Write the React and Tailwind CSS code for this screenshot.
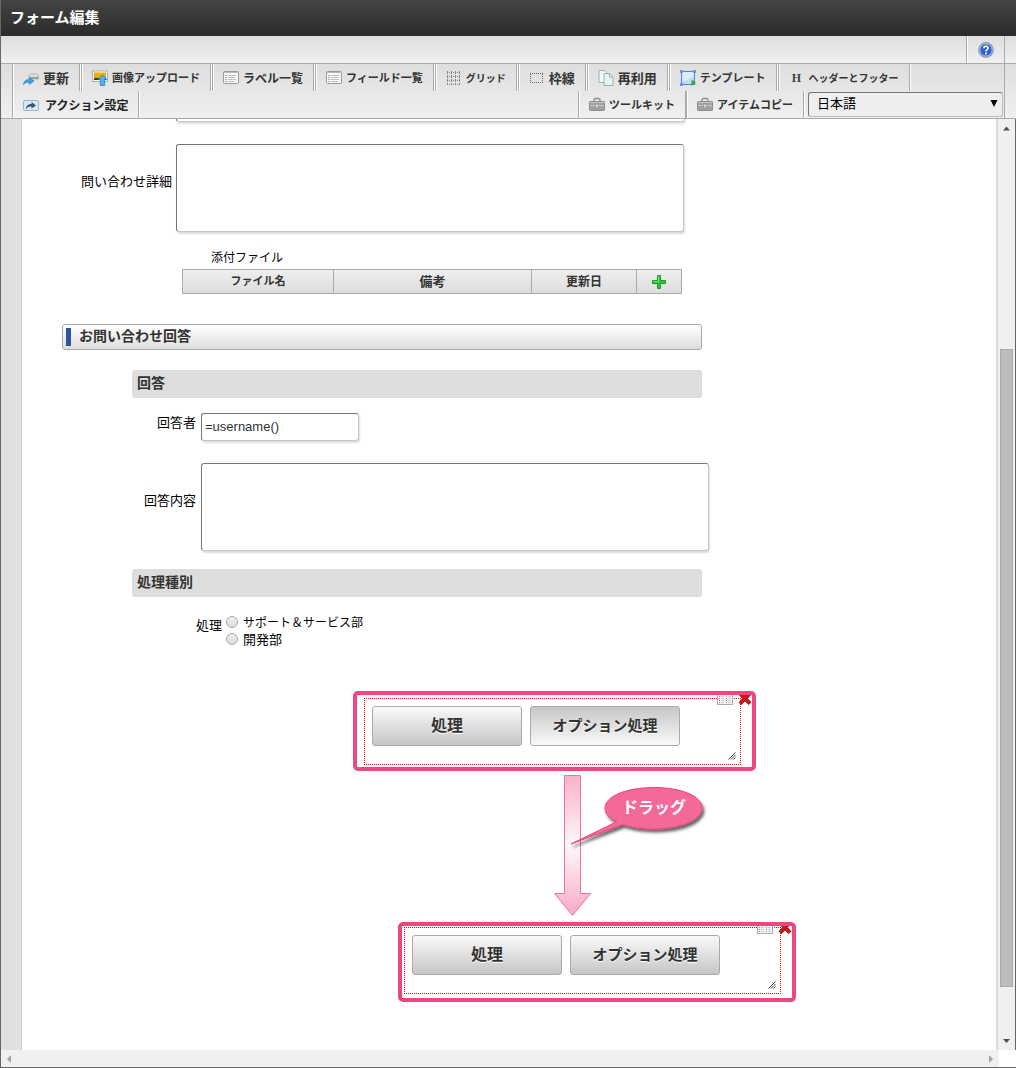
import React from "react";

/* ---------- icons ---------- */

const RefreshIcon = () => (
  <svg width="16" height="16" viewBox="0 0 16 16" className="shrink-0">
    <path d="M6 5.500L7.500 4H14L15.500 6V9H6z" fill="#d9dcdd" stroke="#a5a8aa" strokeWidth="0.7" />
    <path d="M6 7h9.500v2H9z" fill="#9ea3a5" />
    <circle cx="13.500" cy="8" r="0.8" fill="#3fc34a" />
    <path d="M0.500 14.500C0.800 11 3 9.500 6.500 9.500V7.500L11 11L6.500 14.500V12.500C4 12.300 2 12.500 0.500 14.500z" fill="#3da0e2" stroke="#2b7cb8" strokeWidth="0.6" />
  </svg>
);

const UploadIcon = () => (
  <svg width="16" height="16" viewBox="0 0 16 16" className="shrink-0">
    <rect x="0.500" y="1" width="15" height="10.500" fill="#f8f8f8" stroke="#9ba3a8" strokeWidth="0.8" />
    <rect x="2" y="2.500" width="12" height="7.500" fill="#e5af12" />
    <path d="M2 8.500C4 6.500 6 9 9 7.500S12.500 7 14 8.500V10H2z" fill="#3b3518" />
    <path d="M10.500 5L15 9.500H12.700V15.500H8.300V9.500H6z" fill="#4bb1f0" stroke="#2577b5" strokeWidth="0.7" />
  </svg>
);

const ListIcon = () => (
  <svg width="16" height="16" viewBox="0 0 16 16" className="shrink-0">
    <rect x="0.500" y="1.500" width="15" height="12" rx="1" fill="#f8f8f8" stroke="#9a9a9a" />
    <path d="M1 2.500H15" stroke="#b8b8b8" />
    <path d="M5 5.500H13M5 7.500H12M5 9.500H13M5 11.500H12" stroke="#c0c0c0" />
    <path d="M2 5.500H4M2 11.500H4" stroke="#7fa5e0" />
    <path d="M2 7.500H4" stroke="#e09a9a" />
    <path d="M2 9.500H4" stroke="#8cc68c" />
  </svg>
);

const GridIcon = () => (
  <svg width="16" height="16" viewBox="0 0 16 16" className="shrink-0">
    <path
      d="M1 2.500H15M1 6.500H15M1 10.500H15M1 14.500H15M1.500 1V15M5.500 1V15M9.500 1V15M13.500 1V15"
      stroke="#858585"
      strokeDasharray="1 1"
      shapeRendering="crispEdges"
    />
  </svg>
);

const FrameIcon = () => (
  <svg width="16" height="16" viewBox="0 0 16 16" className="shrink-0">
    <path
      d="M1 3.500H14M1 12.500H14M1.500 4V12M13.500 4V12"
      fill="none"
      stroke="#666"
      strokeDasharray="1 1"
      shapeRendering="crispEdges"
    />
  </svg>
);

const CopyIcon = () => (
  <svg width="16" height="16" viewBox="0 0 16 16" className="shrink-0">
    <path d="M1 0.500H6.500L9 3V12.500H1z" fill="#f2f8f8" stroke="#8fa3a3" strokeWidth="0.8" />
    <path d="M6 3.500H11.500L15 7V15.500H6z" fill="#e4f2f1" stroke="#8fa3a3" strokeWidth="0.8" />
    <path d="M11.500 3.500V7H15z" fill="#fff" stroke="#8fa3a3" strokeWidth="0.8" />
  </svg>
);

const TemplateIcon = () => (
  <svg width="16" height="16" viewBox="0 0 16 16" className="shrink-0">
    <rect x="1.500" y="1.500" width="13" height="13" fill="#dcebf9" stroke="#527fe0" />
    <path d="M2 11C6 11 10 8 14 7V14H2z" fill="#c2dcf0" />
    <path d="M0 0H3V3H0zM13 0H16V3H13zM0 13H3V16H0z" fill="#6b96f0" />
    <path d="M11.500 9.500L16 13L11.500 16z" fill="#27b22f" />
  </svg>
);

const HeaderIcon = () => (
  <span className="w-4 shrink-0 text-center font-['Liberation_Serif',serif] text-[12px] font-bold text-[#444]">
    H
  </span>
);

const ActionIcon = () => (
  <svg width="16" height="16" viewBox="0 0 16 16" className="shrink-0">
    <rect x="0.500" y="3.500" width="15" height="10" rx="1.500" fill="#d5e8f5" stroke="#91b7d3" />
    <path d="M3 12C3 8.500 5.500 7 8.500 7V5L13 8.500L8.500 11.500V9.500C6 9.500 4.500 10 3 12z" fill="#46505a" />
  </svg>
);

const ToolboxIcon = () => (
  <svg width="16" height="16" viewBox="0 0 16 16" className="shrink-0">
    <path d="M5 5V3C5 2 5.500 1.500 6.500 1.500H9.500C10.500 1.500 11 2 11 3V5" fill="none" stroke="#8c8c8c" strokeWidth="1.300" />
    <rect x="0.500" y="4.500" width="15" height="9" rx="0.800" fill="#a2a2a2" stroke="#8c8c8c" />
    <path d="M1 5.500H15" stroke="#c4c4c4" />
    <path d="M1 8.500H15" stroke="#c8c8c8" />
    <rect x="7" y="7" width="2" height="4" fill="#eee" stroke="#777" strokeWidth="0.500" />
  </svg>
);

const HelpIcon = () => (
  <svg width="16" height="16" viewBox="0 0 16 16" className="shrink-0">
    <circle cx="8" cy="8" r="7.300" fill="#2f5fd0" stroke="#9aa0aa" strokeWidth="1.200" />
    <circle cx="8" cy="8" r="6.200" fill="none" stroke="#dfe6f6" strokeWidth="0.800" />
    <path d="M5.900 6.300C5.900 3.600 10.200 3.700 10.100 6.200C10.100 7.700 8 7.700 8 9.400" fill="none" stroke="#fff" strokeWidth="1.600" />
    <circle cx="8" cy="11.600" r="1" fill="#fff" />
  </svg>
);

const PlusIcon = () => (
  <svg width="14" height="14" viewBox="0 0 14 14" className="block">
    <path d="M5.500 0.500H8.500V5.500H13.500V8.500H8.500V13.500H5.500V8.500H0.500V5.500H5.500z" fill="#2fc437" stroke="#229a2c" />
    <path d="M6.500 1.500V6.500H1.500" fill="none" stroke="#7fe385" />
  </svg>
);

const ColumnsIcon = () => (
  <svg width="16" height="16" viewBox="0 0 16 16" className="block">
    <rect x="0.500" y="1.500" width="15" height="13" fill="#f6f6f6" stroke="#aaa" />
    <path d="M4 6.500H7M4 8.500H7M4 10.500H7M4 12.500H7M11 6.500H14M11 8.500H14M11 10.500H14M11 12.500H14" stroke="#ccc" />
    <path d="M2 6.500H3M2 10.500H3M9 8.500H10" stroke="#5a8ee0" />
    <path d="M2 8.500H3M2 12.500H3M9 12.500H10" stroke="#d66" />
    <path d="M9 6.500H10" stroke="#e0b030" />
    <path d="M9 10.500H10" stroke="#4fae4f" />
  </svg>
);

const CloseIcon = () => (
  <svg width="14" height="16" viewBox="0 0 14 16" className="block">
    <path
      d="M1.500 5L4 3L7 6L10 3L12.500 5L9.500 8.500L13 12.500L10.500 14.500L7 11L3.500 14.500L1 12.500L4.500 8.500z"
      fill="#cf1515"
      stroke="#8f1010"
      strokeWidth="0.800"
    />
  </svg>
);

const ResizeGrip = () => (
  <svg width="8" height="8" viewBox="0 0 8 8" className="absolute right-1 bottom-1">
    <path d="M0.500 7.500L7.500 0.500M3 7.500L7.500 3M5.500 7.500L7.500 5.500" stroke="#444" />
  </svg>
);

/* ---------- toolbar ---------- */

const mainTools = [
  { label: "更新", icon: RefreshIcon, size: "text-[13px]" },
  { label: "画像アップロード", icon: UploadIcon, size: "text-[11px]" },
  { label: "ラベル一覧", icon: ListIcon, size: "text-[12px]" },
  { label: "フィールド一覧", icon: ListIcon, size: "text-[11px]" },
  { label: "グリッド", icon: GridIcon, size: "text-[10px]" },
  { label: "枠線", icon: FrameIcon, size: "text-[13px]" },
  { label: "再利用", icon: CopyIcon, size: "text-[13px]" },
  { label: "テンプレート", icon: TemplateIcon, size: "text-[11px]" },
  { label: "ヘッダーとフッター", icon: HeaderIcon, size: "text-[10px]" },
];

function ToolButton({ label, icon: Icon, size }) {
  return (
    <button
      type="button"
      className={`flex h-[27px] items-center gap-1 border-x border-[#aaa] px-[10px] font-bold whitespace-nowrap text-[#333] shadow-[1px_0_0_#fff,inset_1px_0_0_#fff] ${size}`}
    >
      <Icon />
      {label}
    </button>
  );
}

function Toolbar() {
  return (
    <div className="flex border-b border-[#aaa] bg-linear-to-b from-[#dedede] to-[#f0f0f0]">
      <div className="flex-1 border-r border-[#aaa] pl-[11px]">
        <div className="flex gap-px">
          {mainTools.map((tool) => (
            <ToolButton key={tool.label} {...tool} />
          ))}
        </div>
        <div className="flex items-center justify-between">
          <button
            type="button"
            className="flex h-[27px] items-center gap-[6px] border-x border-[#aaa] px-[10px] text-[12px] font-bold text-[#222] shadow-[1px_0_0_#fff,inset_1px_0_0_#fff]"
          >
            <ActionIcon />
            アクション設定
          </button>
          <div className="flex items-center">
            <ToolButton label="ツールキット" icon={ToolboxIcon} size="text-[11px]" />
            <ToolButton label="アイテムコピー" icon={ToolboxIcon} size="text-[11px]" />
            <div className="relative ml-1">
              <select
                aria-label="言語"
                className="block h-[25px] w-[195px] appearance-none rounded-[3px] border border-[#bbb] border-t-[#777] border-l-[#777] bg-[#eee] pb-1 pl-2 text-[13px] text-black"
              >
                <option>日本語</option>
              </select>
              <svg width="8" height="7" viewBox="0 0 8 7" className="pointer-events-none absolute top-2 right-[5px]">
                <path d="M0.500 0H7.500L4 7z" fill="#000" />
              </svg>
            </div>
            <div className="w-px" />
          </div>
        </div>
      </div>
      <div className="w-[11px]" />
    </div>
  );
}

/* ---------- form parts ---------- */

const fieldStyle =
  "block rounded-[3px] border border-[#c4c4c4] border-t-[#777] border-l-[#777] bg-white shadow-[1px_2px_2px_#ddd]";

function SubHeading({ children }) {
  return (
    <h3 className="ml-[110px] flex h-7 w-[570px] items-center rounded-[3px] bg-[#ddd] px-[5px] pb-[3px] text-[14px] font-bold text-[#333]">
      {children}
    </h3>
  );
}

function ButtonPanel({ className, pressed }) {
  const up = "bg-linear-to-b from-[#fafafa] to-[#c6c6c6]";
  const down = "bg-linear-to-b from-[#c6c6c6] to-[#fafafa]";
  const base =
    "h-10 w-[150px] rounded-[3px] border border-[#aaa] pb-[3px] font-bold text-[#333] [text-shadow:0_1px_0_#fff]";
  return (
    <div className={`h-20 overflow-hidden rounded-[5px] border-4 border-[#ee467f] ${className}`}>
      <div className="relative flex h-[67px] w-[377px] gap-2 border border-dotted border-[#f00] p-[7px]">
        <button type="button" className={`${base} ${up} text-[16px]`}>
          処理
        </button>
        <button type="button" className={`${base} ${pressed ? down : up} text-[15px]`}>
          オプション処理
        </button>
        <button type="button" aria-label="設定" className="absolute -top-[9px] right-[7px]">
          <ColumnsIcon />
        </button>
        <button type="button" aria-label="削除" className="absolute -top-[9px] -right-3">
          <CloseIcon />
        </button>
        <ResizeGrip />
      </div>
    </div>
  );
}

function DragArrow() {
  return (
    <svg width="160" height="145" viewBox="0 0 160 145" className="ml-[531px] block">
      <defs>
        <linearGradient id="arrowFill" x1="0" y1="0" x2="0" y2="1">
          <stop offset="0" stopColor="#f8b0cb" />
          <stop offset="0.5" stopColor="#fff8fb" />
          <stop offset="1" stopColor="#f7a8c6" />
        </linearGradient>
        <filter id="balloonShadow" x="-20%" y="-20%" width="150%" height="150%">
          <feDropShadow dx="2" dy="3" stdDeviation="1.500" floodColor="#000" floodOpacity="0.600" />
        </filter>
      </defs>
      <path d="M11.500 1.500H27.500V119.500H37.500L19.500 141.500L1.500 119.500H11.500z" fill="url(#arrowFill)" stroke="#f0709f" />
      <path
        d="M64 47.500C55 44 52 39 52 34C52 22 74 13.500 101 13.500S149 22 149 34S128 55 101 55C89 55 78 53.500 70 50.500L18 70z"
        fill="#f3699a"
        stroke="#ec417e"
        filter="url(#balloonShadow)"
      />
      <text x="101" y="39" textAnchor="middle" fontSize="16" fontWeight="700" fill="#fff">
        ドラッグ
      </text>
    </svg>
  );
}

function FormCanvas() {
  return (
    <main className="min-w-0 flex-1 bg-white text-[13px] leading-[17px] text-black">
      <div className="ml-[154px] h-[3px] w-[509px] rounded-b-[3px] border-x border-b border-[#c4c4c4] border-l-[#777] shadow-[1px_2px_2px_#ddd]" />

      <div className="mt-[22px] flex">
        <label htmlFor="detail" className="w-[150px] pt-7 text-right">
          問い合わせ詳細
        </label>
        <textarea id="detail" className={`ml-1 h-[88px] w-[508px] resize-none ${fieldStyle}`} />
      </div>

      <table className="mt-4 ml-40 w-[500px] table-fixed border-collapse text-[#333]">
        <caption className="pb-1 pl-[29px] text-left text-[12px] text-black">添付ファイル</caption>
        <thead>
          <tr className="h-6 bg-linear-to-b from-[#eee] to-[#ddd]">
            <th className="w-[151px] border border-[#aaa] pb-[3px] text-[11px]">ファイル名</th>
            <th className="border border-[#aaa] pb-[3px]">備考</th>
            <th className="w-[105px] border border-[#aaa] pb-[3px] text-[12px]">更新日</th>
            <th className="w-[45px] border border-[#aaa]">
              <button type="button" aria-label="追加" className="mx-auto block">
                <PlusIcon />
              </button>
            </th>
          </tr>
        </thead>
      </table>

      <h2 className="mt-[30px] ml-10 flex h-[26px] w-[640px] items-center gap-2 rounded-[3px] border border-[#aaa] bg-linear-to-b from-white to-[#ddd] px-[3px] text-[14px] font-bold text-[#333]">
        <span className="h-[18px] w-[5px] bg-[#2f5597]" />
        <span className="pb-[3px]">お問い合わせ回答</span>
      </h2>

      <div className="mt-5">
        <SubHeading>回答</SubHeading>
      </div>

      <div className="mt-[15px] flex">
        <label htmlFor="answerer" className="w-[174px] text-right">
          回答者
        </label>
        <input
          id="answerer"
          type="text"
          defaultValue="=username()"
          className={`ml-[5px] h-7 w-[158px] px-[3px] pb-[2px] font-['Liberation_Sans',sans-serif] text-[13px] text-[#333] ${fieldStyle}`}
        />
      </div>

      <div className="mt-[22px] flex">
        <label htmlFor="answer" className="w-[174px] pt-7 text-right">
          回答内容
        </label>
        <textarea id="answer" className={`ml-[5px] h-[88px] w-[508px] resize-none ${fieldStyle}`} />
      </div>

      <div className="mt-[18px]">
        <SubHeading>処理種別</SubHeading>
      </div>

      <fieldset className="mt-4 flex">
        <legend className="float-left w-[200px] pt-[3px] text-right">処理</legend>
        <div className="ml-1">
          {[
            { label: "サポート＆サービス部", size: "text-[12px]" },
            { label: "開発部", size: "text-[13px]" },
          ].map(({ label, size }) => (
            <label key={label} className={`flex h-[17px] items-center gap-[5px] ${size}`}>
              <input
                type="radio"
                name="process"
                className="size-3 appearance-none rounded-full border border-[#aaa] bg-linear-to-b from-[#eee] to-[#ddd] checked:bg-[#666]"
              />
              {label}
            </label>
          ))}
        </div>
      </fieldset>

      <ButtonPanel pressed className="mt-11 ml-[331px] w-[403px] pt-[3px] pl-[7px]" />
      <div className="py-[3px]">
        <DragArrow />
      </div>
      <ButtonPanel className="mb-12 ml-[376px] w-[398px] pt-px pl-[2px]" />
    </main>
  );
}

/* ---------- scroll bars ---------- */

function VerticalScroll() {
  return (
    <div className="flex w-[19px] flex-col items-center border-l-2 border-[#dadada] bg-[#f0f0f0]">
      <svg width="9" height="18" viewBox="0 0 9 18" className="shrink-0">
        <path d="M1 11.500L4.500 7.500L8 11.500z" fill="#505050" />
      </svg>
      <div className="grow-212" />
      <div className="w-[13px] grow-638 border border-[#a8a8a8] bg-[#bcbcbc]" />
      <div className="grow-45" />
      <svg width="9" height="18" viewBox="0 0 9 18" className="shrink-0">
        <path d="M1 7L4.500 11L8 7z" fill="#505050" />
      </svg>
    </div>
  );
}

function HorizontalScroll() {
  return (
    <div className="flex h-[17px] bg-white">
      <div className="flex flex-1 items-center justify-between bg-[#f0f0f0] px-[6px]">
        <svg width="4" height="8" viewBox="0 0 4 8">
          <path d="M4 0V8L0 4z" fill="#a3a3a3" />
        </svg>
        <svg width="4" height="8" viewBox="0 0 4 8">
          <path d="M0 0V8L4 4z" fill="#a3a3a3" />
        </svg>
      </div>
      <div className="w-[17px]" />
    </div>
  );
}

export default function App() {
  return (
    <div className="flex min-h-screen flex-col border-b border-l border-[#666] bg-white font-['Noto_Sans_CJK_JP',sans-serif]">
      <header className="flex h-9 items-center bg-linear-to-b from-[#444] to-[#2b2b2b] px-[9px] pb-1">
        <h1 className="text-[15px] leading-none font-bold text-white">フォーム編集</h1>
      </header>

      <div className="flex h-7 justify-end border-b border-[#aaa] bg-linear-to-b from-[#dedede] to-[#f0f0f0]">
        <button
          type="button"
          aria-label="ヘルプ"
          className="flex w-[39px] items-center justify-center border-x border-[#aaa] shadow-[inset_1px_0_0_#fff]"
        >
          <HelpIcon />
        </button>
        <div className="w-[11px]" />
      </div>

      <Toolbar />

      <div className="flex flex-1 border-r border-[#666]">
        <div className="w-[21px] border-r border-[#ccc] bg-[#e0e0e0]" />
        <FormCanvas />
        <VerticalScroll />
      </div>
      <HorizontalScroll />
    </div>
  );
}
